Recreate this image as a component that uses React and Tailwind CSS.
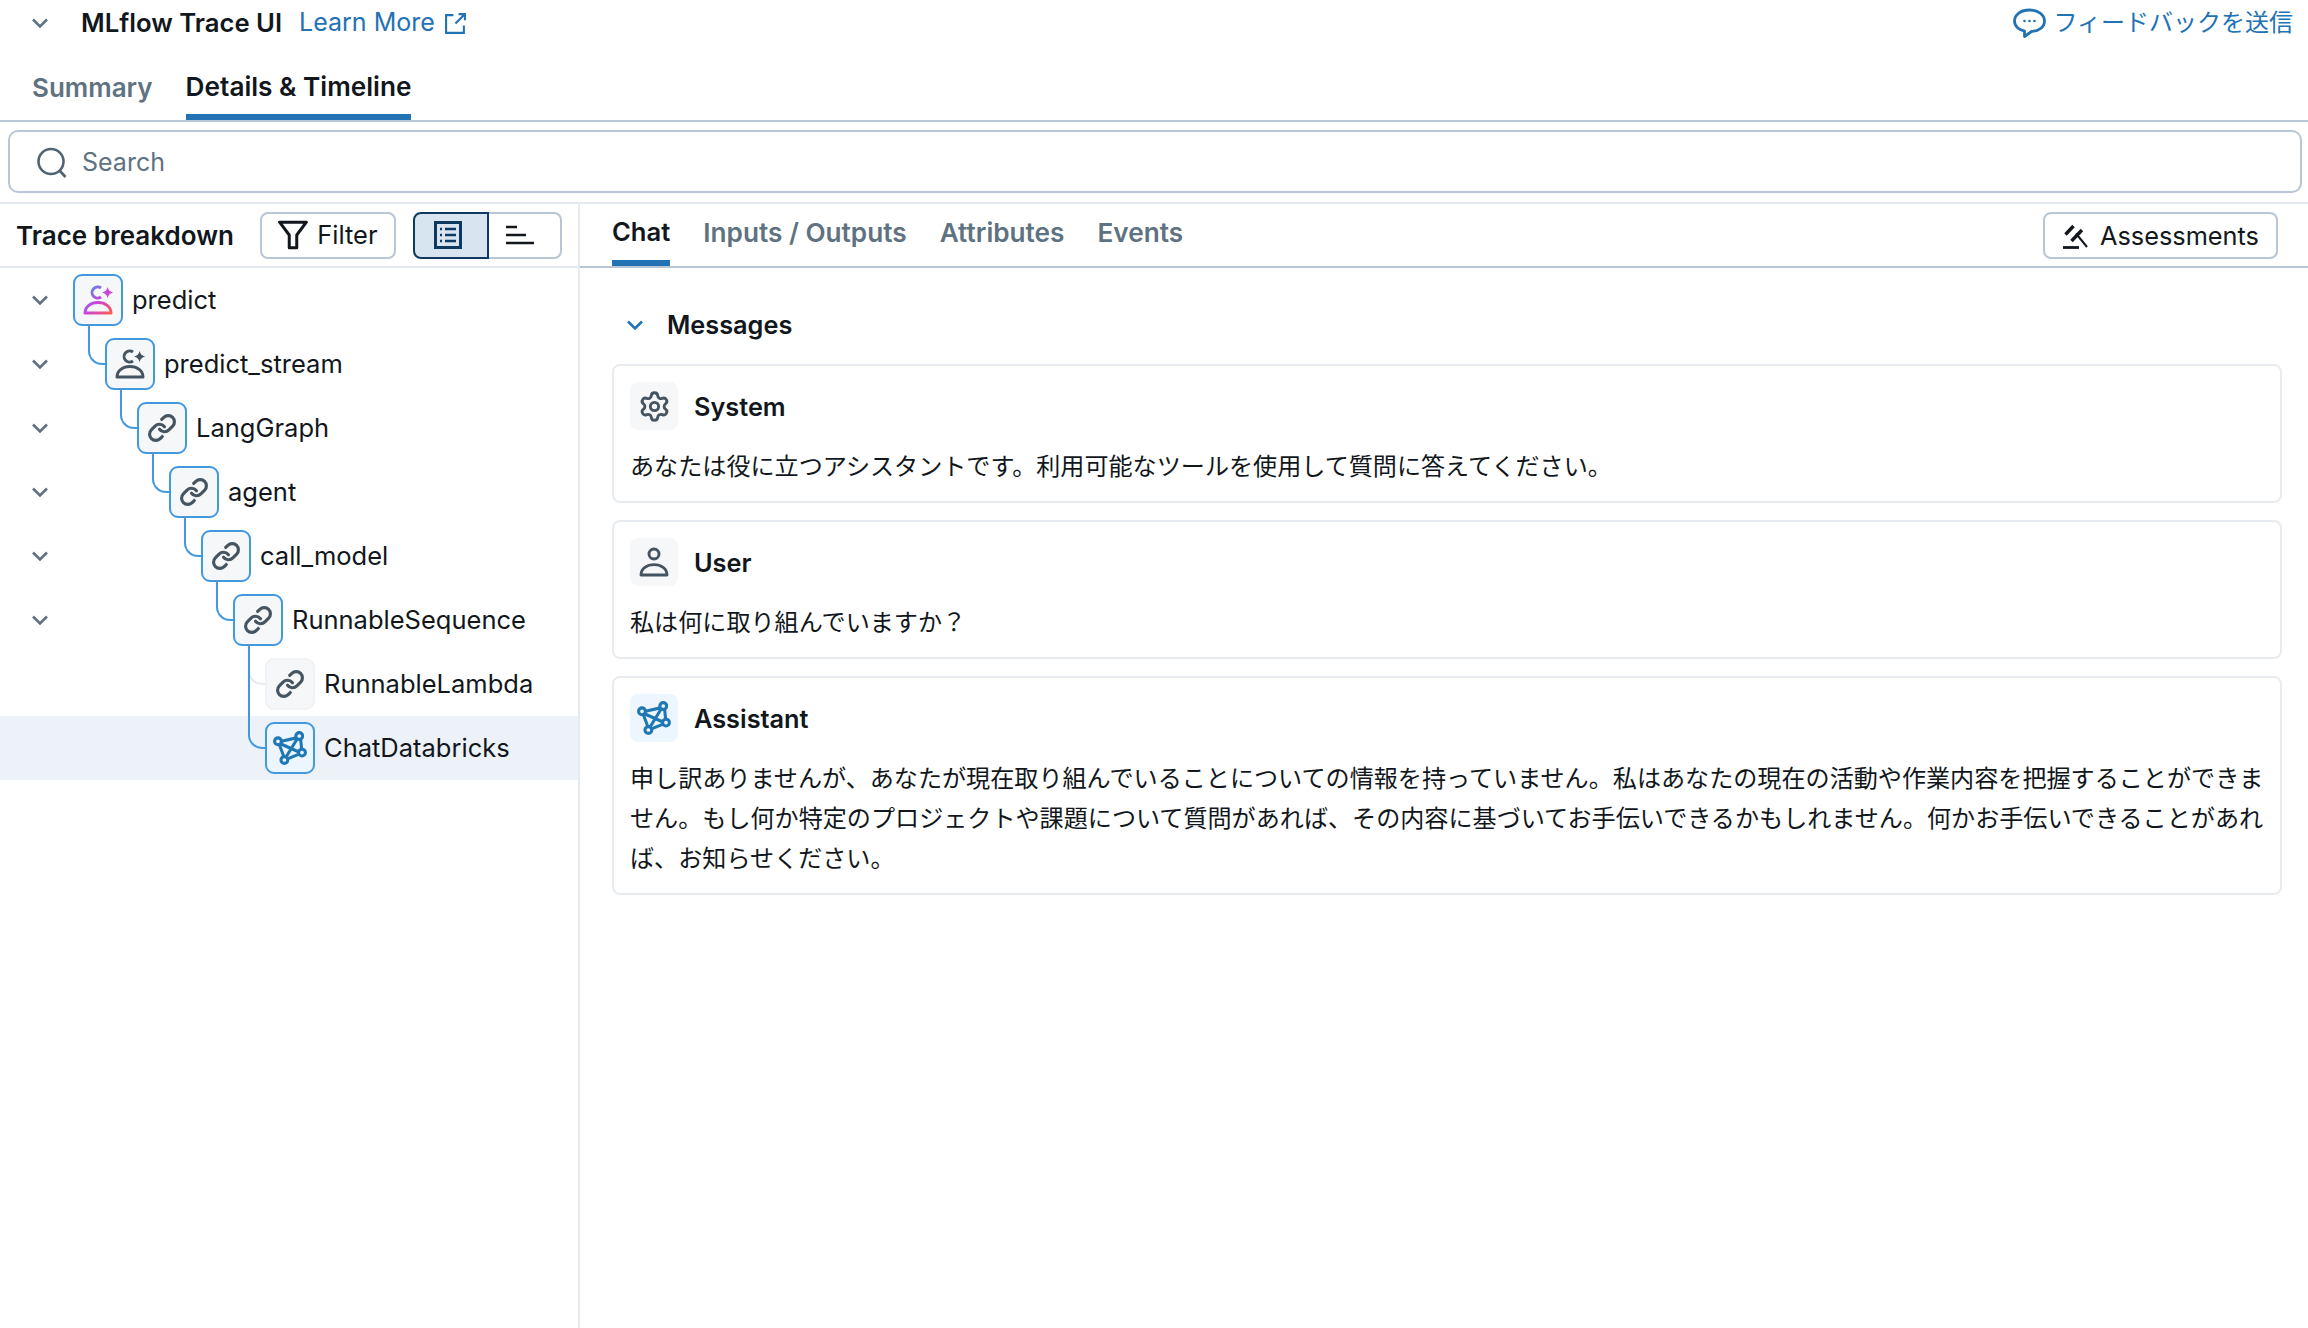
import React from 'react';
import { Link, Settings } from 'lucide-react';

const Chevron = ({ className = 'text-[#5f7281]' }) => (
  <svg width="18" height="12" viewBox="0 0 18 12" fill="none" stroke="currentColor" strokeWidth="2.6" className={className}>
    <path d="M2 2.5 L9 9.5 L16 2.5" />
  </svg>
);

const UserSpark = ({ gradient }) => {
  const stroke = gradient ? 'url(#aiGrad)' : '#445461';
  return (
    <svg width="32" height="32" viewBox="0 0 32 32" fill="none">
      <defs>
        <linearGradient id="aiGrad" gradientUnits="userSpaceOnUse" x1="3" y1="3" x2="30" y2="30">
          <stop offset="0" stopColor="#4299e0" />
          <stop offset="0.5" stopColor="#ca42e0" />
          <stop offset="1" stopColor="#ff5f46" />
        </linearGradient>
      </defs>
      <path d="M19 4 A5.6 5.6 0 1 0 19 13" stroke={stroke} strokeWidth="2.9" />
      <path d="M25.6 3 Q26.6 7.6 31.2 8.6 Q26.6 9.6 25.6 14.2 Q24.6 9.6 20 8.6 Q24.6 7.6 25.6 3Z" fill={stroke} />
      <path d="M3 29 C3 22.5 9 18.6 16 18.6 S29 22.5 29 29 Z" stroke={stroke} strokeWidth="3" strokeLinejoin="round" />
    </svg>
  );
};

const Network = () => (
  <svg width="34" height="34" viewBox="0 0 32 32" fill="none" stroke="#1f78b4" strokeWidth="2.9">
    <path d="M24 6 L7 9.8 M7 12 L25 20 M23 7 L12 25 M26 8 L27 17 M24 22 L13 26.5 M6 13 L10 23.5" />
    <circle cx="24.7" cy="4.7" r="3.2" fill="#edf6fe" />
    <circle cx="4.7" cy="9.7" r="3.2" fill="#edf6fe" />
    <circle cx="27.3" cy="20.3" r="3.2" fill="#edf6fe" />
    <circle cx="10.7" cy="27.3" r="3.2" fill="#edf6fe" />
  </svg>
);

const LinkIcon = () => <Link size={30} strokeWidth={2.5} color="#445461" />;

const rows = [
  { name: 'predict', depth: 0, icon: <UserSpark gradient />, chevron: true },
  { name: 'predict_stream', depth: 1, icon: <UserSpark />, chevron: true, line: 'short' },
  { name: 'LangGraph', depth: 2, icon: <LinkIcon />, chevron: true, line: 'short' },
  { name: 'agent', depth: 3, icon: <LinkIcon />, chevron: true, line: 'short' },
  { name: 'call_model', depth: 4, icon: <LinkIcon />, chevron: true, line: 'short' },
  { name: 'RunnableSequence', depth: 5, icon: <LinkIcon />, chevron: true, line: 'short' },
  { name: 'RunnableLambda', depth: 6, icon: <LinkIcon />, line: 'faint', muted: true },
  { name: 'ChatDatabricks', depth: 6, icon: <Network />, line: 'long', selected: true },
];

const TreeRow = ({ row }) => (
  <div className={`flex h-16 items-center ${row.selected ? 'bg-[#edf2f8]' : ''}`}>
    <div className="flex w-[73px] shrink-0 pl-[31px]">{row.chevron && <Chevron />}</div>
    <div
      style={{ marginLeft: row.depth * 32 }}
      className={`relative flex h-[52px] w-[50px] shrink-0 items-center justify-center rounded-[9px] border-2 ${
        row.muted ? 'border-[#f0f2f5] bg-[#f6f7f9]' : row.selected ? 'border-[#4299e0] bg-[#edf6fe]' : 'border-[#4299e0] bg-[#f6f7f9]'
      }`}
    >
      {row.line === 'short' && (
        <div className="absolute left-[-19px] top-[-14px] h-[39px] w-[17px] rounded-bl-[14px] border-b-2 border-l-2 border-[#4299e0]" />
      )}
      {row.line === 'faint' && (
        <div className="absolute left-[-19px] top-[-14px] h-[39px] w-[17px] rounded-bl-[14px] border-b-2 border-l-2 border-[#e5eaf1]" />
      )}
      {row.line === 'long' && (
        <div className="absolute left-[-19px] top-[-78px] h-[103px] w-[17px] rounded-bl-[14px] border-b-2 border-l-2 border-[#4299e0]" />
      )}
      {row.icon}
    </div>
    <span className="ml-[9px] pt-[1px] text-[25.5px] text-[#11171c]">{row.name}</span>
  </div>
);

const Card = ({ icon, iconBg = 'bg-[#f6f7f9]', title, children }) => (
  <div className="rounded-[8px] border-2 border-[#e8ecf1] pb-[14px] pl-[16px] pr-[8px] pt-[16px]">
    <div className="flex items-center">
      <div className={`flex h-[48px] w-[48px] items-center justify-center rounded-[8px] ${iconBg}`}>{icon}</div>
      <span className="ml-[16px] pt-[1px] text-[25.3px] font-semibold text-[#11171c]">{title}</span>
    </div>
    <p className="mt-[17px] text-[24.1px] leading-[40px] text-[#11171c]">{children}</p>
  </div>
);

export default function App() {
  return (
    <div className="flex h-[1328px] w-[2308px] flex-col overflow-hidden bg-white font-['Inter','Noto_Sans_CJK_JP',sans-serif]">
      {/* Title */}
      <div className="flex h-[46px] shrink-0 items-center pr-[15px]">
        <div className="ml-[31px] flex"><Chevron /></div>
        <span className="ml-[32px] text-[25.7px] font-semibold text-[#11171c]">MLflow Trace UI</span>
        <span className="ml-[17px] text-[25px] text-[#2272b4]">Learn More</span>
        <svg width="23" height="23" viewBox="0 0 22 22" fill="none" stroke="#2272b4" strokeWidth="2" className="ml-[9px]">
          <path d="M9 3 H2 V20 H19 V13 M11 11 L20 2 M14 2 H20 V8" />
        </svg>
        <div className="ml-auto flex items-center">
          <svg width="33" height="30" viewBox="0 0 33 30" fill="none">
            <path d="M16.5 2 C8 2 1.5 6.5 1.5 13 C1.5 19 7 22.5 11.5 23 L11.5 28.5 L18.5 23.5 C26 23 31.5 19 31.5 13 C31.5 6.5 25 2 16.5 2Z" stroke="#2272b4" strokeWidth="2.8" strokeLinejoin="round" />
            <circle cx="11.5" cy="13" r="1.3" fill="#2272b4" />
            <circle cx="16.5" cy="13" r="1.3" fill="#2272b4" />
            <circle cx="21.5" cy="13" r="1.3" fill="#2272b4" />
          </svg>
          <span className="ml-[7px] text-[24px] text-[#2272b4]">フィードバックを送信</span>
        </div>
      </div>

      {/* Top tabs */}
      <div className="flex h-[76px] shrink-0 items-end gap-[33px] border-b-2 border-[#b8c6d6] pl-[32px]">
        <div className="flex h-[56px] items-start pt-[4px] text-[26px] font-semibold text-[#5f7281]">Summary</div>
        <div className="flex h-[56px] items-start border-b-[6px] border-[#2272b4] pt-[3px] text-[26.2px] font-semibold text-[#11171c]">Details &amp; Timeline</div>
      </div>

      {/* Search */}
      <div className="ml-[8px] mr-[6px] mt-[8px] flex h-[63px] shrink-0 items-center rounded-[10px] border-2 border-[#b8c6d6] pl-[26px] pt-[2px]">
        <svg width="32" height="32" viewBox="0 0 32 32" fill="none" stroke="#4f6474" strokeWidth="2.6">
          <circle cx="15" cy="14.5" r="12.5" />
          <path d="M24 24 L29.5 30" />
        </svg>
        <span className="ml-[14px] text-[25px] text-[#5f7281]">Search</span>
      </div>

      {/* Panes */}
      <div className="mt-[9px] flex flex-1 border-t-2 border-[#e5eaf1]">
        <div className="w-[580px] shrink-0 border-r-2 border-[#e5eaf1]">
          <div className="flex h-[64px] items-center border-b-2 border-[#e5eaf1] pl-[16px]">
            <span className="text-[26px] font-semibold text-[#11171c]">Trace breakdown</span>
            <button className="ml-[26px] flex h-[47px] w-[136px] items-center justify-center rounded-[8px] border-2 border-[#b8c6d6] text-[25.5px] text-[#11171c]">
              <svg width="30" height="30" viewBox="0 0 28 28" fill="none" stroke="#11171c" strokeWidth="2.8" strokeLinejoin="round">
                <path d="M1.5 2 H26.5 L17.5 14 V26 H10.5 V14 Z" />
              </svg>
              <span className="ml-[9px]">Filter</span>
            </button>
            <div className="ml-[17px] flex h-[47px]">
              <div className="flex w-[76px] items-center justify-center rounded-l-[8px] border-2 border-[#0e3a62] bg-[#d8e5f0] pr-[6px]">
                <svg width="28" height="28" viewBox="0 0 28 28" fill="none" stroke="#0e3a62" strokeWidth="3">
                  <rect x="1.5" y="1.5" width="25" height="25" />
                  <path d="M11 8 H22 M11 14 H22 M11 20 H22 M6 8 H8 M6 14 H8 M6 20 H8" strokeWidth="2.4" />
                </svg>
              </div>
              <div className="flex w-[73px] items-center justify-center rounded-r-[8px] border-2 border-l-0 border-[#b8c6d6] pr-[8px]">
                <svg width="28" height="20" viewBox="0 0 28 20" fill="none" stroke="#11171c" strokeWidth="2.6">
                  <path d="M0 2 H11 M0 10 H20 M0 18 H28" />
                </svg>
              </div>
            </div>
          </div>
          {rows.map((row) => (
            <TreeRow key={row.name} row={row} />
          ))}
        </div>

        <div className="min-w-0 flex-1">
          <div className="flex h-[64px] items-start border-b-2 border-[#b8c6d6] pl-[32px] pr-[30px]">
            <div className="flex h-[62px] gap-[33px]">
              <div className="h-[62px] border-b-[6px] border-[#2272b4] pt-[9px] text-[25.6px] font-semibold text-[#11171c]">Chat</div>
              <div className="pt-[9px] text-[26.2px] font-semibold text-[#5f7281]">Inputs / Outputs</div>
              <div className="pt-[9px] text-[26.2px] font-semibold text-[#5f7281]">Attributes</div>
              <div className="pt-[9px] text-[26.2px] font-semibold text-[#5f7281]">Events</div>
            </div>
            <button className="ml-auto mt-[8px] flex h-[47px] w-[235px] items-center justify-center rounded-[8px] border-2 border-[#b8c6d6] text-[25.3px] text-[#11171c]">
              <svg width="26" height="26" viewBox="0 0 26 26" fill="none" stroke="#11171c">
                <path d="M3.5 11.5 L11.5 3 M9.5 18 L20 7" strokeWidth="3.4" />
                <path d="M14 10.5 L25 24" strokeWidth="2" />
                <path d="M1 24.5 H17" strokeWidth="2.8" />
              </svg>
              <span className="ml-[12px]">Assessments</span>
            </button>
          </div>

          <div className="pl-[32px] pr-[26px]">
            <div className="flex h-[96px] items-center pt-[17px]">
              <div className="ml-[14px] flex"><Chevron className="text-[#2272b4]" /></div>
              <span className="ml-[23px] text-[25.3px] font-semibold text-[#11171c]">Messages</span>
            </div>
            <div className="flex flex-col gap-[17px]">
              <Card title="System" icon={<Settings size={33} strokeWidth={2.1} color="#445461" />}>
                あなたは役に立つアシスタントです。利用可能なツールを使用して質問に答えてください。
              </Card>
              <Card
                title="User"
                icon={
                  <svg width="30" height="32" viewBox="0 0 30 32" fill="none" stroke="#445461" strokeWidth="2.9" strokeLinejoin="round">
                    <circle cx="15" cy="8" r="5" />
                    <path d="M2 29 C2 22.5 8 18.6 15 18.6 S28 22.5 28 29 Z" />
                  </svg>
                }
              >
                私は何に取り組んでいますか？
              </Card>
              <Card title="Assistant" iconBg="bg-[#edf6fe]" icon={<Network />}>
                申し訳ありませんが、あなたが現在取り組んでいることについての情報を持っていません。私はあなたの現在の活動や作業内容を把握することができません。もし何か特定のプロジェクトや課題について質問があれば、その内容に基づいてお手伝いできるかもしれません。何かお手伝いできることがあれば、お知らせください。
              </Card>
            </div>
          </div>
        </div>
      </div>
    </div>
  );
}
